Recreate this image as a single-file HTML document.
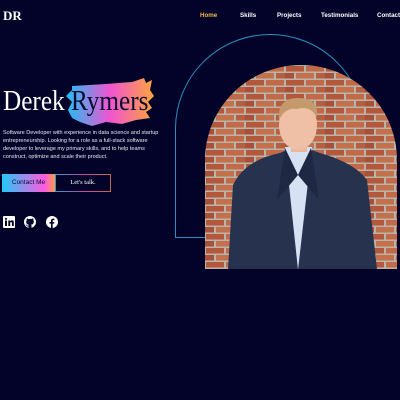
<!DOCTYPE html>
<html><head><style>
*{margin:0;padding:0;box-sizing:border-box}
body{width:400px;height:400px;background:#03032a;position:relative;overflow:hidden;font-family:"Liberation Sans",sans-serif;color:#fff}
.a{position:absolute}
.nav{font-size:6.2px;font-weight:bold;top:12px;white-space:nowrap}
</style></head><body>
<div class="a" style="left:3px;top:8px;font-family:'Liberation Serif',serif;font-size:13px;font-weight:bold">DR</div>
<div class="a nav" style="left:200px;color:#f2b94a">Home</div>
<div class="a nav" style="left:240px">Skills</div>
<div class="a nav" style="left:277px">Projects</div>
<div class="a nav" style="left:321px">Testimonials</div>
<div class="a nav" style="left:377px">Contact</div>

<div class="a" style="left:175px;top:34px;width:190px;height:204px;border:1.2px solid #2a8cc0;border-radius:95px 95px 0 0"></div>

<svg class="a" style="left:205px;top:65px" width="192" height="204" viewBox="0 0 192 204">
<defs>
<clipPath id="c"><path d="M0 204 V95 A96 95 0 0 1 192 95 V204 Z"/></clipPath>
<pattern id="b" width="40" height="14" patternUnits="userSpaceOnUse">
<rect width="40" height="14" fill="#b9b4aa"/>
<rect x="1" y="1" width="18" height="5.5" fill="#b3583b"/>
<rect x="21" y="1" width="18" height="5.5" fill="#c26a48"/>
<rect x="-9" y="8" width="18" height="5.5" fill="#a9503a"/>
<rect x="11" y="8" width="18" height="5.5" fill="#c4704c"/>
<rect x="31" y="8" width="18" height="5.5" fill="#b75e40"/>
</pattern>
</defs>
<g clip-path="url(#c)">
<rect width="192" height="204" fill="url(#b)"/>
<path d="M23 204 L28 120 Q40 95 75 88 L93 80 L115 88 Q150 98 162 115 L172 204 Z" fill="#27324f"/>
<path d="M80 82 L93 205 L107 82 Z" fill="#d6e2f4"/>
<path d="M80 83 L93 110 L72 135 Z" fill="#1e2843"/>
<path d="M106 83 L93 110 L114 135 Z" fill="#1e2843"/>
<rect x="86" y="65" width="16" height="22" fill="#e9b79f"/>
<ellipse cx="93" cy="60" rx="19" ry="25" fill="#efbfa6"/>
<path d="M74 55 Q72 33 93 33 Q114 33 112 52 Q105 40 92 44 Q80 42 74 55Z" fill="#c49a6c"/>
</g>
</svg>

<svg class="a" style="left:66px;top:78px" width="88" height="50" viewBox="0 0 88 50">
<defs><linearGradient id="g" x1="0" x2="1"><stop offset="0" stop-color="#1ec0f5"/><stop offset=".5" stop-color="#f054d0"/><stop offset="1" stop-color="#ffa53c"/></linearGradient></defs>
<path d="M6 8 L40 6 L66 4 L78 0 L80 5 L86 2 L84 12 L88 18 L82 24 L86 30 L80 34 L84 40 L70 42 L56 46 L40 44 L26 48 L14 44 L6 40 L2 32 L6 24 L0 18 L6 12Z" fill="url(#g)"/>
</svg>
<div class="a" style="left:3px;top:85px;font-family:'Liberation Serif',serif;font-size:29px;white-space:nowrap;transform:scaleX(0.87);transform-origin:0 0">Derek <span style="color:#0b0b30">Rymers</span></div>

<div class="a" style="left:3px;top:129px;width:166px;font-size:5.5px;line-height:8px;color:#e8e8f0">Software Developer with experience in data science and startup entrepreneurship. Looking for a role as a full-stack software developer to leverage my primary skills, and to help teams construct, optimize and scale their product.</div>

<div class="a" style="left:2px;top:174px;width:53px;height:18px;background:linear-gradient(90deg,#22c8f8,#ff5ae0 80%,#ff9a4a);color:#0b0b30;font-size:6.5px;line-height:18px;text-align:center">Contact Me</div>
<div class="a" style="left:55px;top:174px;width:56px;height:18px;border:1px solid;border-image:linear-gradient(90deg,#2a9cd0,#c04a9a,#c06a50) 1;font-family:'Liberation Serif',serif;font-size:6.5px;line-height:16px;text-align:center">Let's talk.</div>

<svg class="a" style="left:3px;top:216px" width="12" height="12" viewBox="0 0 12 12"><rect width="12" height="12" rx="1" fill="#fff"/><rect x="2" y="4.5" width="2" height="5.5" fill="#03032a"/><circle cx="3" cy="2.8" r="1.1" fill="#03032a"/><path d="M5.3 4.5h1.9v0.8q0.6-1 1.8-1q1.8 0 1.8 2.2V10H8.9V7q0-1-0.8-1t-0.9 1v3H5.3z" fill="#03032a"/></svg>
<svg class="a" style="left:24px;top:216px" width="12" height="12" viewBox="0 0 16 16"><path fill="#fff" d="M8 0C3.58 0 0 3.58 0 8c0 3.540 2.29 6.53 5.47 7.59.4.07.55-.17.55-.38v-1.33c-2.230.48-2.69-1.07-2.69-1.070-.36-.92-.89-1.17-.89-1.17-.73-.5.06-.49.06-.49.8.06 1.23.83 1.23.83.71 1.23 1.87.87 2.33.66.07-.52.28-.87.51-1.07-1.78-.2-3.64-.89-3.64-3.95 0-.87.31-1.59.82-2.15-.08-.2-.36-1.02.08-2.12 0 0 .67-.21 2.2.82A7.6 7.6 0 0 1 8 3.8c.68 0 1.36.09 2 .27 1.53-1.04 2.2-.82 2.2-.82.44 1.1.16 1.92.08 2.12.51.56.82 1.27.82 2.15 0 3.07-1.87 3.75-3.65 3.95.29.25.54.73.54 1.48v2.2c0 .21.15.46.55.38A8 8 0 0 0 16 8c0-4.42-3.58-8-8-8z"/></svg>
<svg class="a" style="left:46px;top:216px" width="12" height="12" viewBox="0 0 16 16"><circle cx="8" cy="8" r="8" fill="#fff"/><path d="M8.9 16V10.2h1.9l.3-2.2H8.9V6.6c0-.6.2-1.1 1.1-1.1h1.2V3.6c-.2 0-.9-.1-1.7-.1-1.7 0-2.9 1-2.9 2.9V8H4.7v2.2h1.9V16z" fill="#03032a"/></svg>
</body></html>
